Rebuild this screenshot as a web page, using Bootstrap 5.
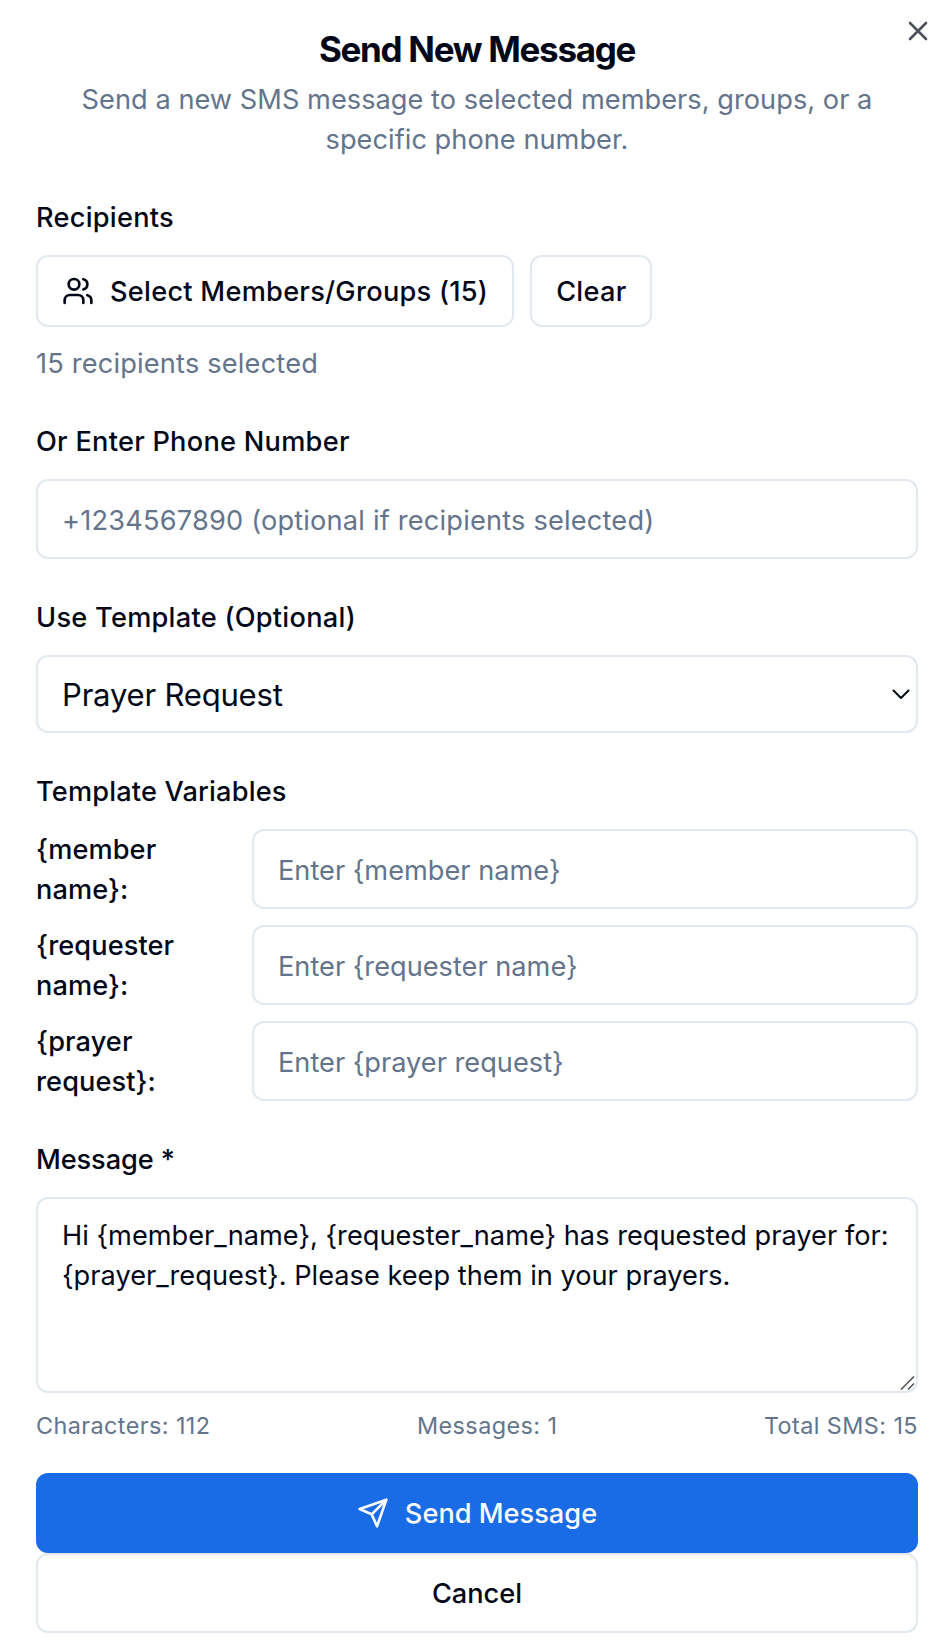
<!DOCTYPE html>
<html lang="en">
<head>
<meta charset="utf-8">
<meta name="viewport" content="width=device-width, initial-scale=1">
<title>Send New Message</title>
<link href="https://cdn.jsdelivr.net/npm/bootstrap@5.3.0/dist/css/bootstrap.min.css" rel="stylesheet">
<style>
:root{--ink:#020817;--soft:#64748b;--line:#e2e8f0;--brand:#1a6ce6}
body{font-family:Inter,"Liberation Sans",sans-serif;font-size:27.2px;line-height:40px;color:var(--ink);background:#fff}
.dialog{width:950px;height:1650px;padding:29px 32px 0 36px;overflow:hidden}
.dialog-title{font-size:35px;line-height:40px;font-weight:650;letter-spacing:-1.3px}
.soft{color:var(--soft)}
.head-text{margin-top:11px;height:80px;letter-spacing:.03px}
.close-btn{position:absolute;top:20px;right:20px;width:24px;height:24px;padding:0;border:0;background:none;line-height:0;color:#4e525d}
.form-part{margin-top:38px}
.section-label{display:block;font-weight:500;line-height:40px;padding-top:1px;margin:0 0 17px;letter-spacing:.26px}
.box,.box:focus{border:2px solid var(--line);border-radius:12px;padding:2px 24px 0;height:80px;font-size:27.2px;line-height:40px;color:var(--ink);box-shadow:none}
.box::placeholder{color:var(--soft);opacity:1}
.box.phone{letter-spacing:.19px}
.box.pick{height:78px;font-size:31.1px;letter-spacing:-.23px;background:#fff;appearance:none}
.box.area{height:196px;padding:17px 18px 16px 24px;resize:none;display:block;letter-spacing:.01px}
.pick-arrow{position:absolute;right:8px;top:31px}
.grip{position:absolute;right:2px;bottom:2px}
.tall-btn{border:2px solid var(--line);border-radius:12px;font-size:27.2px;line-height:40px;font-weight:500;color:var(--ink);height:72px;padding:2px 24px 0}
.tall-btn svg{margin-top:-2px}
.pick-btn{letter-spacing:.26px}
.full-btn{height:80px}
.brand-btn,.brand-btn:hover{background:var(--brand);border-color:var(--brand);color:#f8fafc}
.var-name{width:216px;padding:1px 60px 0 0;font-weight:500;flex:none;letter-spacing:.08px}
.var-row{height:80px}
.picked{margin-top:17px;margin-bottom:-1px;letter-spacing:.18px}
.counts{font-size:23.4px;line-height:32px;letter-spacing:.42px;margin-top:17px}
</style>
</head>
<body>
<main class="dialog position-relative">
  <button class="close-btn" type="button" aria-label="Close">
    <svg width="24" height="24" viewBox="0 0 24 24" fill="none" stroke="currentColor" stroke-width="2.6" stroke-linecap="round"><path d="M4 3 20 19M20 3 4 19"/></svg>
  </button>
  <header class="text-center">
    <h1 class="dialog-title mb-0"><span>Send New Message</span></h1>
    <p class="head-text soft mb-0"><span>Send a new SMS message to selected members, groups, or a</span><br><span>specific phone number.</span></p>
  </header>

  <section style="margin-top:37px">
    <label class="section-label">Recipients</label>
    <div class="d-flex gap-3">
      <button class="btn tall-btn pick-btn d-flex align-items-center" type="button">
        <svg class="me-3" width="32" height="32" viewBox="0 0 24 24" fill="none" stroke="currentColor" stroke-width="2" stroke-linecap="round" stroke-linejoin="round"><path d="M16 21v-2a4 4 0 0 0-4-4H6a4 4 0 0 0-4 4v2"/><circle cx="9" cy="7" r="4"/><path d="M22 21v-2a4 4 0 0 0-3-3.870M16 3.130a4 4 0 0 1 0 7.750"/></svg>
        <span>Select Members/Groups (15)</span>
      </button>
      <button class="btn tall-btn pick-btn" type="button">Clear</button>
    </div>
    <p class="soft picked">15 recipients selected</p>
  </section>

  <section class="form-part">
    <label class="section-label">Or Enter Phone Number</label>
    <input class="form-control box phone" type="text" placeholder="+1234567890 (optional if recipients selected)">
  </section>

  <section class="form-part">
    <label class="section-label">Use Template (Optional)</label>
    <div class="position-relative">
      <select class="form-control box pick"><option>Prayer Request</option></select>
      <svg class="pick-arrow" width="18" height="16" viewBox="0 0 18 16" fill="none" stroke="#020817" stroke-width="2" stroke-linecap="round" stroke-linejoin="round"><path d="M1.500 4.500 9 12 16.500 4.500"/></svg>
    </div>
  </section>

  <section class="form-part">
    <label class="section-label" style="letter-spacing:.16px">Template Variables</label>
    <div class="d-flex flex-column gap-3">
      <div class="var-row d-flex align-items-center"><label class="var-name">{member name}:</label><input class="form-control box" type="text" placeholder="Enter {member name}"></div>
      <div class="var-row d-flex align-items-center"><label class="var-name">{requester name}:</label><input class="form-control box" type="text" placeholder="Enter {requester name}"></div>
      <div class="var-row d-flex align-items-center"><label class="var-name">{prayer request}:</label><input class="form-control box" type="text" placeholder="Enter {prayer request}"></div>
    </div>
  </section>

  <section class="form-part">
    <label class="section-label" style="letter-spacing:-.1px">Message *</label>
    <div class="position-relative">
      <textarea class="form-control box area">Hi {member_name}, {requester_name} has requested prayer for: {prayer_request}. Please keep them in your prayers.</textarea>
      <svg class="grip" width="16" height="16" viewBox="0 0 16 16" stroke="#555" stroke-width="1.600"><path d="M1 14.500 14 1.500M8 14.500 14 8.500"/></svg>
    </div>
    <div class="counts soft d-flex justify-content-between"><span>Characters: 112</span><span>Messages: 1</span><span>Total SMS: 15</span></div>
  </section>

  <footer class="d-flex flex-column" style="margin-top:31px">
    <button class="btn tall-btn full-btn brand-btn d-flex align-items-center justify-content-center" type="button">
      <svg class="me-3" width="32" height="32" viewBox="0 0 24 24" fill="none" stroke="currentColor" stroke-width="2" stroke-linecap="round" stroke-linejoin="round"><path d="m22 2-7 20-4-9-9-4ZM22 2 11 13"/></svg>
      <span>Send Message</span>
    </button>
    <button class="btn tall-btn full-btn" type="button">Cancel</button>
  </footer>
</main>
<script src="https://cdn.jsdelivr.net/npm/bootstrap@5.3.0/dist/js/bootstrap.bundle.min.js"></script>
</body>
</html>
